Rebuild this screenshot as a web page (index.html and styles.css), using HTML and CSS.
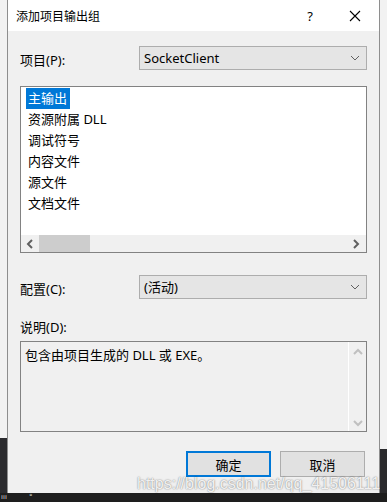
FILE: index.html
```html
<!DOCTYPE html>
<html lang="zh-CN">
<head>
    <meta charset="UTF-8">
    <meta name="viewport" content="width=device-width, initial-scale=1.0">
    <title>添加项目输出组</title>
    <link rel="stylesheet" href="styles.css">
</head>
<body>

<div class="screen">
    <div class="dialog">
        <div class="titlebar">
            <span class="title">添加项目输出组</span>
            <span class="help">?</span>
            <svg class="close" width="12" height="12" viewBox="0 0 12 12">
                <path d="M1 1 L11 11 M11 1 L1 11" stroke="#000" stroke-width="1.1" fill="none"/>
            </svg>
        </div>

        <div class="content">
            <div class="field-row">
                <label class="field-label">项目(P):</label>
                <div class="combo">
                    <span>SocketClient</span>
                    <svg class="chevron" width="10" height="6" viewBox="0 0 10 6">
                        <path d="M1 1 L5 5 L9 1" stroke="#606060" stroke-width="1" fill="none"/>
                    </svg>
                </div>
            </div>

            <div class="listbox">
                <ul class="items">
                    <li class="selected">主输出</li>
                    <li>资源附属 DLL</li>
                    <li>调试符号</li>
                    <li>内容文件</li>
                    <li>源文件</li>
                    <li>文档文件</li>
                </ul>
                <div class="hscroll">
                    <svg class="arrow" width="8" height="10" viewBox="0 0 8 10">
                        <path d="M6 1 L2 5 L6 9" stroke="#606060" stroke-width="2" fill="none"/>
                    </svg>
                    <div class="track"><div class="thumb"></div></div>
                    <svg class="arrow" width="8" height="10" viewBox="0 0 8 10">
                        <path d="M2 1 L6 5 L2 9" stroke="#606060" stroke-width="2" fill="none"/>
                    </svg>
                </div>
            </div>

            <div class="field-row config-row">
                <label class="field-label">配置(C):</label>
                <div class="combo">
                    <span>(活动)</span>
                    <svg class="chevron" width="10" height="6" viewBox="0 0 10 6">
                        <path d="M1 1 L5 5 L9 1" stroke="#606060" stroke-width="1" fill="none"/>
                    </svg>
                </div>
            </div>

            <label class="desc-label">说明(D):</label>
            <div class="textbox">
                <div class="text">包含由项目生成的 DLL 或 EXE。</div>
                <div class="vscroll">
                    <svg width="10" height="8" viewBox="0 0 10 8">
                        <path d="M1 6 L5 2 L9 6" stroke="#c0c0c0" stroke-width="2" fill="none"/>
                    </svg>
                    <svg width="10" height="8" viewBox="0 0 10 8">
                        <path d="M1 2 L5 6 L9 2" stroke="#c0c0c0" stroke-width="2" fill="none"/>
                    </svg>
                </div>
            </div>

            <div class="buttons">
                <button type="button" class="btn btn-default">确定</button>
                <button type="button" class="btn">取消</button>
            </div>
        </div>

        <div class="watermark">https://blog.csdn.net/qq_41506111</div>
    </div>

    <div class="taskbar">
        <span class="ticks">ııı</span>
        <span class="dot">°</span>
    </div>
</div>

</body>
</html>
```

FILE: styles.css
```css
body {
    margin: 0;
    padding: 0;
    font-family: "Segoe UI", "Noto Sans", "Noto Sans CJK SC", sans-serif;
    font-size: 13px;
    color: #000;
    overflow: hidden;
}
.screen {
    width: 387px;
    height: 502px;
    background:
        linear-gradient(to bottom, #f2f2f2 0, #f2f2f2 438px, #2b2b2e 438px) left top / 7px 100% no-repeat,
        linear-gradient(to bottom, #f2f2f2 0, #f2f2f2 449px, #2b2b2e 449px) right top / 7px 100% no-repeat;
}
.dialog {
    position: relative;
    margin-left: 7px;
    width: 371px;
    height: 493px;
    border-left: 1px solid #8e8e8e;
    border-right: 1px solid #8e8e8e;
    background-color: #f0f0f0;
    box-sizing: content-box;
}
.titlebar {
    height: 31px;
    background-color: #fff;
    display: flex;
    align-items: center;
}
.title {
    font-size: 12px;
    margin-left: 8px;
    flex: 1;
}
.help {
    font-size: 13px;
    width: 12px;
    margin-right: 33px;
    text-align: center;
}
.close {
    margin-right: 18px;
}
.content {
    padding: 15px 12px 0 12px;
}
.field-row {
    display: grid;
    grid-template-columns: 119px 228px;
    height: 24px;
}
.field-label {
    padding-top: 6px;
    line-height: 16px;
}
.combo {
    height: 24px;
    box-sizing: border-box;
    border: 1px solid #adadad;
    background-color: #e5e5e5;
    display: flex;
    align-items: center;
    justify-content: space-between;
    padding: 0 6px 0 4px;
    line-height: 16px;
}
.listbox {
    margin-top: 16px;
    height: 167px;
    box-sizing: border-box;
    border: 1px solid #828282;
    background-color: #fff;
    display: flex;
    flex-direction: column;
}
.items {
    list-style: none;
    margin: 0;
    padding: 1px 0 0 5px;
    flex: 1;
}
.items li {
    height: 21px;
    line-height: 21px;
    padding-left: 2px;
    width: max-content;
}
.items li.selected {
    background-color: #0078d7;
    color: #fff;
    width: 42px;
}
.hscroll {
    height: 17px;
    background-color: #f0f0f0;
    display: flex;
    align-items: center;
    padding: 0 6px 0 5px;
}
.hscroll .arrow {
    flex: none;
}
.track {
    flex: 1;
    height: 17px;
    padding: 0 3px 0 5px;
}
.thumb {
    width: 51px;
    height: 17px;
    background-color: #cdcdcd;
}
.config-row {
    margin-top: 22px;
}
.desc-label {
    display: block;
    margin-top: 20px;
    line-height: 16px;
}
.textbox {
    margin-top: 6px;
    height: 91px;
    box-sizing: border-box;
    border: 1px solid #828282;
    display: flex;
}
.text {
    flex: 1;
    padding: 4px 4px;
    line-height: 18px;
}
.vscroll {
    width: 17px;
    border-left: 1px solid #fff;
    display: flex;
    flex-direction: column;
    justify-content: space-between;
    align-items: center;
    padding: 6px 0 4px 0;
}
.buttons {
    margin-top: 19px;
    display: flex;
    justify-content: flex-end;
    gap: 9px;
    padding-right: 2px;
}
.btn {
    width: 85px;
    height: 26px;
    box-sizing: border-box;
    border: 1px solid #adadad;
    background-color: #e1e1e1;
    font-family: inherit;
    font-size: 13px;
    padding: 0;
}
.btn-default {
    border: 2px solid #0078d7;
}
.watermark {
    position: absolute;
    left: 129px;
    top: 474px;
    font-family: "Liberation Sans", Arial, sans-serif;
    font-size: 16px;
    line-height: 19px;
    color: rgba(255, 255, 255, 0.9);
    text-shadow: 0 0 2px rgba(0, 0, 0, 0.35), 0 0 1px rgba(0, 0, 0, 0.3);
    white-space: nowrap;
}
.taskbar {
    height: 9px;
    background-color: #1e1e1e;
    color: #ddd;
    font-family: "DejaVu Sans", sans-serif;
    font-size: 7px;
    line-height: 9px;
}
.ticks {
    margin-left: 1px;
}
.dot {
    margin-left: 20px;
}
```
